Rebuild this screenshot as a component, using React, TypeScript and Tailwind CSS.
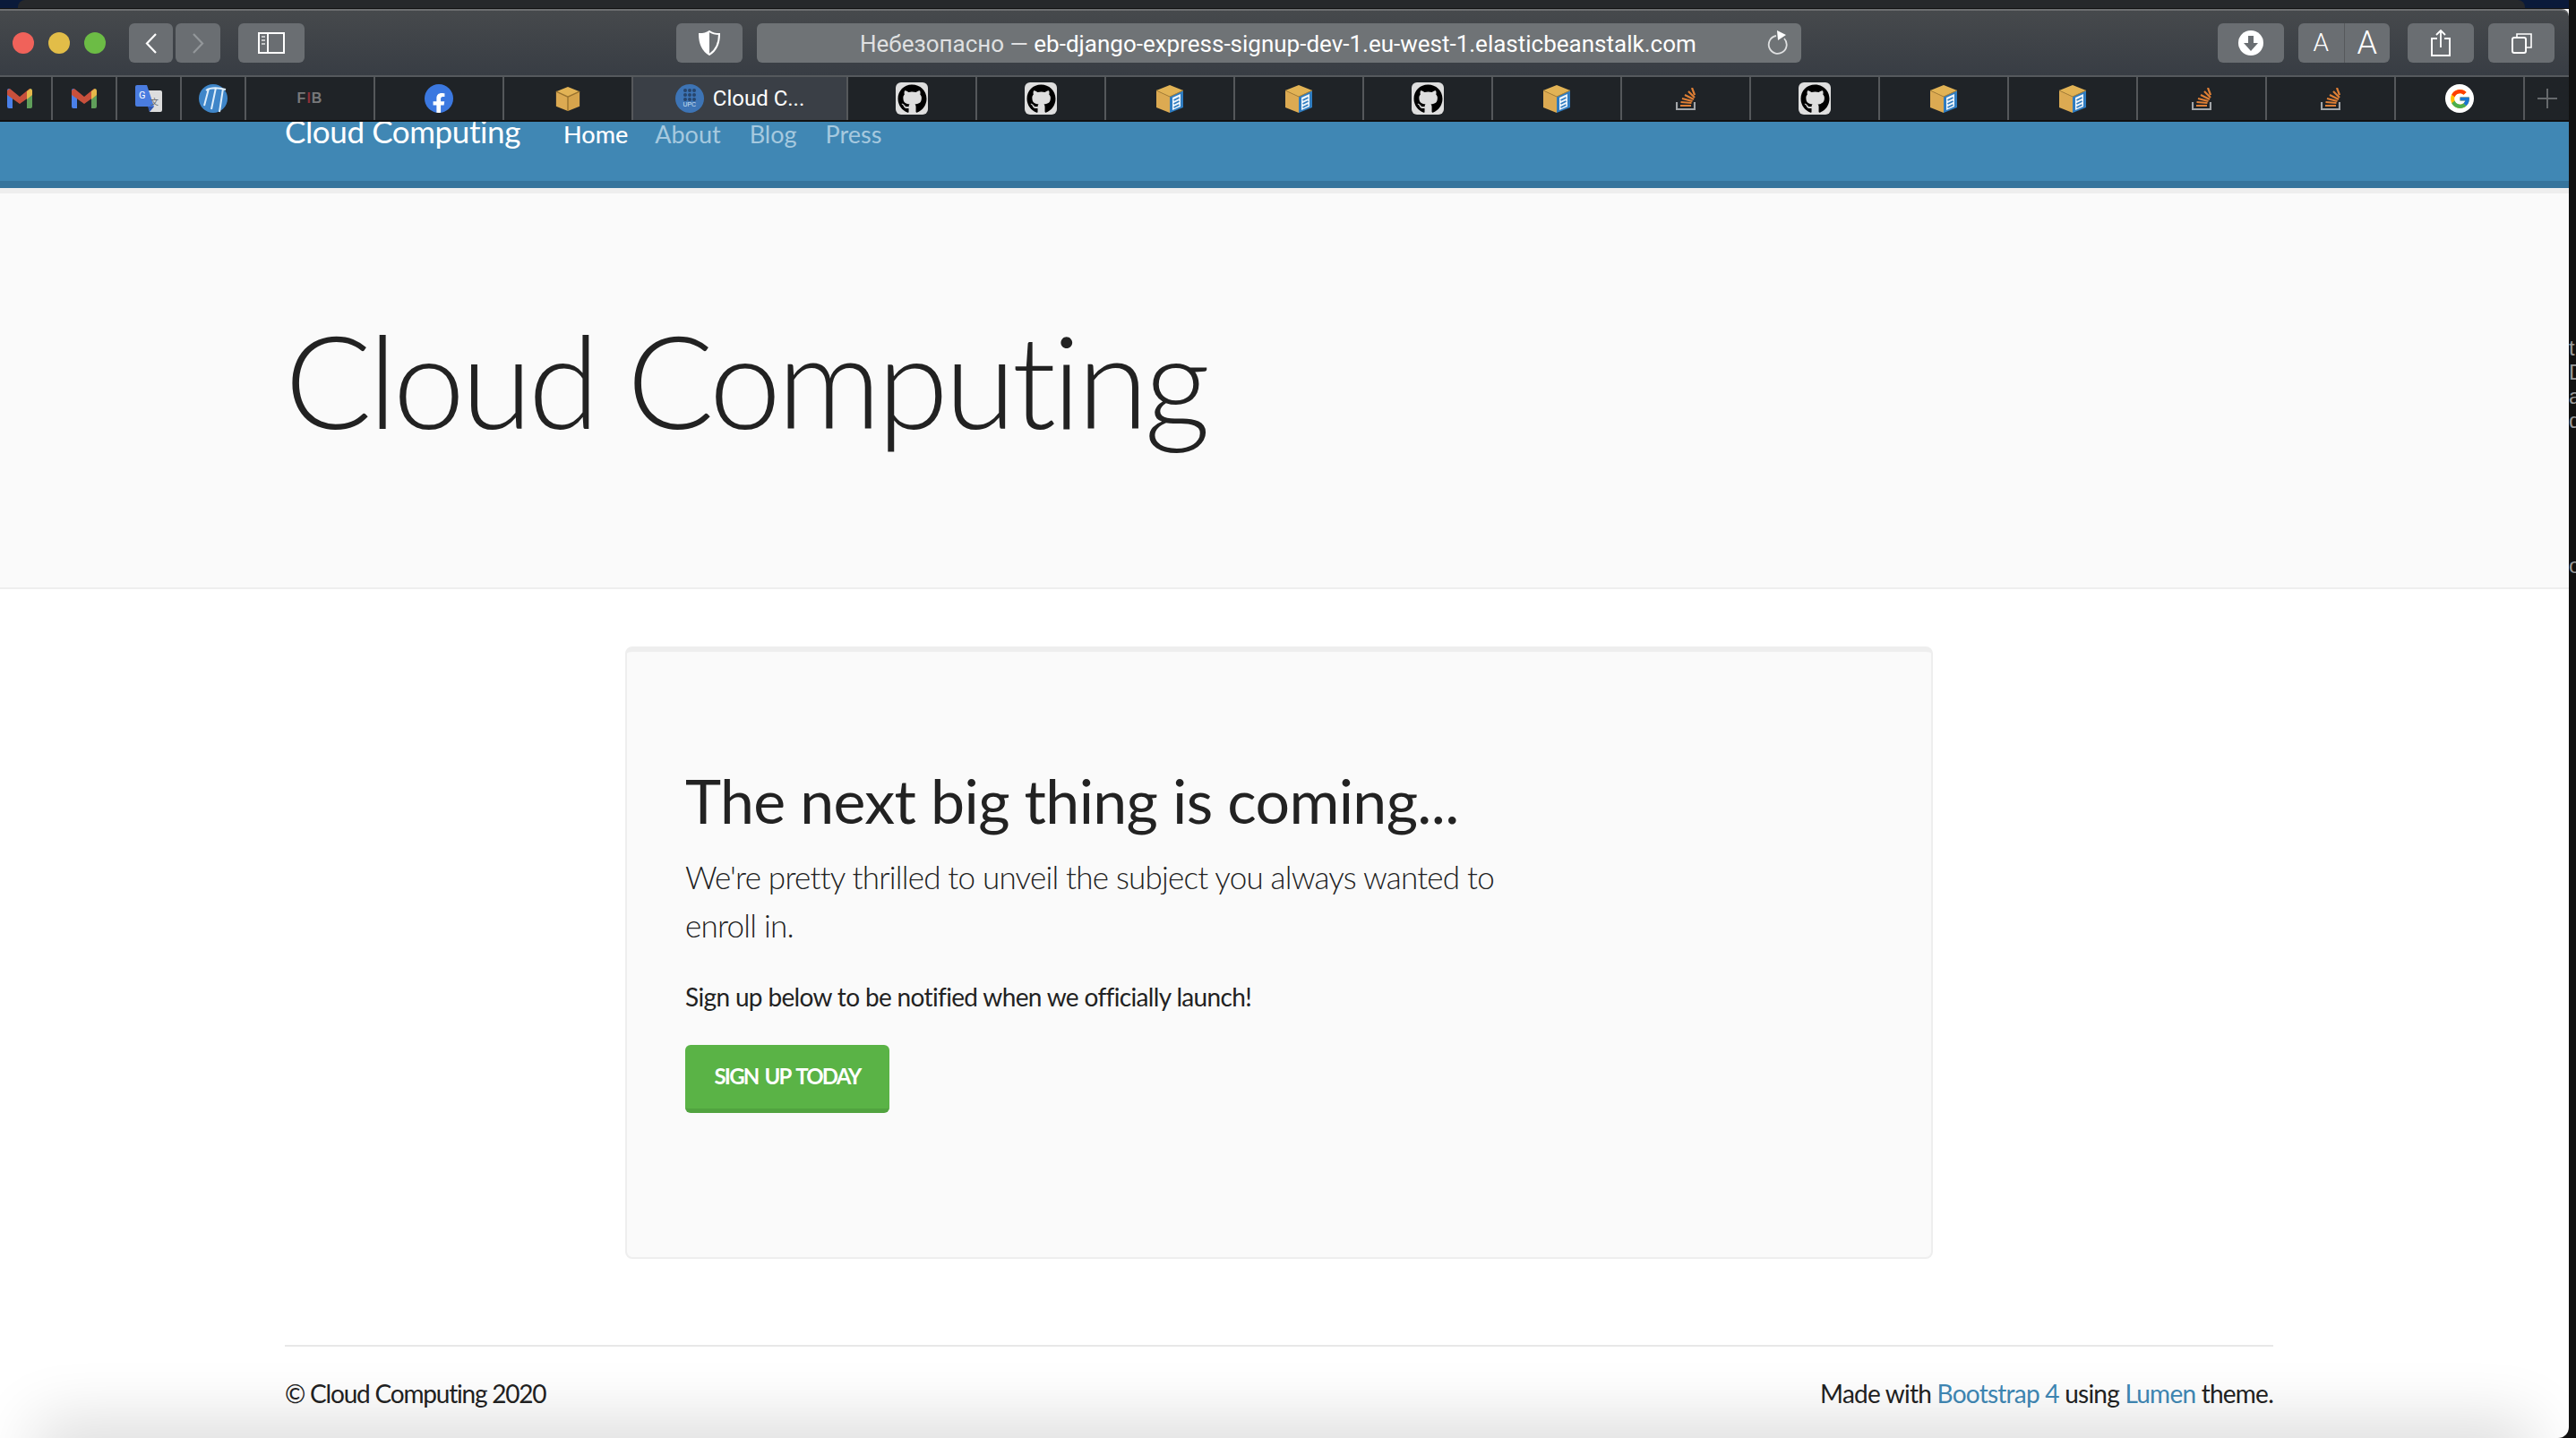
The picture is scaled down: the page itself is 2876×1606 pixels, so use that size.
import { FaFacebookF, FaGithub } from "react-icons/fa";
import { FcGoogle } from "react-icons/fc";

const GmailIcon = () => (
  <svg width="28" height="22" viewBox="0 0 28 22">
    <path d="M0 2a2 2 0 0 1 2-2l4 3v19H2a2 2 0 0 1-2-2z" fill="#4a80e8" />
    <path d="M22 3l4-3a2 2 0 0 1 2 2v18a2 2 0 0 1-2 2h-4z" fill="#5f9e5a" />
    <path d="M0 2l3-2 11 9L25 0l3 2v5L14 17 0 7z" fill="#c8503c" />
    <path d="M22 3l4-3 2 2v5l-6 5z" fill="#e6b84a" />
  </svg>
);

const TranslateIcon = () => (
  <svg width="30" height="30" viewBox="0 0 30 30">
    <path d="M12 6h16a2 2 0 0 1 2 2v20a2 2 0 0 1-2 2H16z" fill="#dddddd" />
    <path d="M2 0h11l8 24H2a2 2 0 0 1-2-2V2a2 2 0 0 1 2-2z" fill="#4a7ce0" />
    <path d="M14 24h7l-5 6z" fill="#2f56b0" />
    <text x="4" y="15" fontSize="11" fontFamily="Roboto, sans-serif" fill="#fff">G</text>
    <text x="17" y="22" fontSize="9" fontFamily="'Noto Sans CJK SC', sans-serif" fill="#666">文</text>
  </svg>
);

const MoodleIcon = () => (
  <svg width="32" height="32" viewBox="0 0 32 32">
    <circle cx="16" cy="16" r="16" fill="#3f86c9" />
    <path d="M6 24L11 5M14 28L19 4M23 31L27 5M8 7C14 3 22 4 30 6" stroke="#dfeefa" strokeWidth="2" fill="none" />
  </svg>
);

const FibIcon = () => (
  <div className="flex h-[12px] items-center font-['Liberation_Sans',sans-serif] text-[16px] leading-none font-bold tracking-[1px] text-[#77787a]">
    F<span className="text-[#8b3038]">I</span>B
  </div>
);

const FacebookIcon = () => (
  <div className="flex h-[32px] w-[32px] items-end justify-center overflow-hidden rounded-full bg-[#3b78e0]">
    <FaFacebookF size={24} color="#ffffff" className="translate-y-[2px]" />
  </div>
);

const BoxIcon = ({ doc }: { doc?: boolean }) => (
  <svg width={doc ? 32 : 28} height={doc ? 32 : 28} viewBox="0 0 32 32">
    <path d="M1 7l15-6 15 6-15 7z" fill="#e2b355" />
    <path d="M1 7l15 7v18L1 26z" fill="#dcaa52" />
    <path d="M16 14l15-7v19l-15 6z" fill={doc ? "#2f7cc0" : "#d6a44c"} />
    {doc ? (
      <path d="M19 15l9-4v14l-9 4z" fill="#eef5fb" />
    ) : (
      <path d="M16 14v18M1 7l15 7 15-7" stroke="#9a7430" strokeWidth="1.6" fill="none" />
    )}
    {doc && <path d="M20.5 18l6-3M20.5 22l6-3M20.5 26l6-3" stroke="#2f7cc0" strokeWidth="1.8" />}
    {doc && <path d="M1 7l15 7 15-7" stroke="#a9823a" strokeWidth="1" fill="none" />}
  </svg>
);

const GithubIcon = () => (
  <div className="flex h-[36px] w-[36px] items-center justify-center rounded-[6px] bg-[#dedede]">
    <FaGithub size={33} color="#000000" />
  </div>
);

const StackIcon = () => (
  <svg width="22" height="25" viewBox="0 0 22 25">
    <path d="M1 16v8h20v-8" stroke="#a3a6a9" strokeWidth="2.2" fill="none" />
    <path d="M5 20h12M5.5 16l12 1M7 12l11.5 3M10 8l10 5M14 4l7 7M18 0l3 8" stroke="#df7f35" strokeWidth="2.2" fill="none" />
  </svg>
);

const GoogleIcon = () => (
  <div className="flex h-[32px] w-[32px] items-center justify-center rounded-full bg-white">
    <FcGoogle size={25} />
  </div>
);

const ToolButton = ({ className, children }: { className: string; children?: React.ReactNode }) => (
  <div className={`flex h-[44px] items-center justify-center rounded-[6px] bg-[#6a6e72] ${className}`}>
    {children}
  </div>
);

const Tab = ({ children, small }: { children: React.ReactNode; small?: boolean }) => (
  <div
    className={`flex h-full shrink-0 items-center justify-center border-r-2 border-[#55585b] ${
      small ? "w-[72px]" : "w-[144px]"
    }`}
  >
    {children}
  </div>
);

const TabBar = () => (
  <div className="flex h-[50px] shrink-0 -ml-[13px] border-t-2 border-[#55595d] bg-[#1f2327]">
    <Tab small>
      <GmailIcon />
    </Tab>
    <Tab small>
      <GmailIcon />
    </Tab>
    <Tab small>
      <TranslateIcon />
    </Tab>
    <Tab small>
      <MoodleIcon />
    </Tab>
    <Tab>
      <FibIcon />
    </Tab>
    <Tab>
      <FacebookIcon />
    </Tab>
    <Tab>
      <BoxIcon />
    </Tab>
    <div className="flex h-full w-[240px] shrink-0 items-center justify-center gap-[10px] border-r-2 border-[#55585b] bg-[#3a3f46]">
      <div className="flex h-[32px] w-[32px] flex-col items-center justify-center rounded-full bg-[#3d74b5]">
        <div className="grid grid-cols-3 gap-[1px]">
          {Array.from({ length: 9 }).map((_, i) => (
            <div key={i} className="h-[4px] w-[4px] rounded-full bg-[#27456c]" />
          ))}
        </div>
        <span className="font-['Liberation_Sans',sans-serif] text-[7px] leading-[8px] text-[#cfe0f2]">UPC</span>
      </div>
      <span className="font-['Roboto',sans-serif] text-[24px] text-white">Cloud C...</span>
    </div>
    <Tab>
      <GithubIcon />
    </Tab>
    <Tab>
      <GithubIcon />
    </Tab>
    <Tab>
      <BoxIcon doc />
    </Tab>
    <Tab>
      <BoxIcon doc />
    </Tab>
    <Tab>
      <GithubIcon />
    </Tab>
    <Tab>
      <BoxIcon doc />
    </Tab>
    <Tab>
      <StackIcon />
    </Tab>
    <Tab>
      <GithubIcon />
    </Tab>
    <Tab>
      <BoxIcon doc />
    </Tab>
    <Tab>
      <BoxIcon doc />
    </Tab>
    <Tab>
      <StackIcon />
    </Tab>
    <Tab>
      <StackIcon />
    </Tab>
    <Tab>
      <GoogleIcon />
    </Tab>
    <div className="flex h-full flex-1 items-center justify-center">
      <svg width="22" height="22" viewBox="0 0 22 22">
        <path d="M11 0v22M0 11h22" stroke="#66696c" strokeWidth="2" />
      </svg>
    </div>
  </div>
);

const Toolbar = () => (
  <div className="flex h-[74px] shrink-0 items-center rounded-tr-[8px] border-t-2 border-[#6c6e70] bg-gradient-to-b from-[#46494c] to-[#383d44] pl-[14px] pr-[16px]">
    <div className="h-[24px] w-[24px] rounded-full bg-[#f0625a]" />
    <div className="ml-[16px] h-[24px] w-[24px] rounded-full bg-[#e2bd48]" />
    <div className="ml-[16px] h-[24px] w-[24px] rounded-full bg-[#6cbc45]" />
    <ToolButton className="ml-[26px] w-[49px]">
      <svg width="13" height="23" viewBox="0 0 13 23">
        <path d="M12 1L2 11.5 12 22" stroke="#ffffff" strokeWidth="2.2" fill="none" />
      </svg>
    </ToolButton>
    <ToolButton className="ml-[3px] w-[50px]">
      <svg width="13" height="23" viewBox="0 0 13 23">
        <path d="M1 1l10 10.5L1 22" stroke="#93979a" strokeWidth="2.2" fill="none" />
      </svg>
    </ToolButton>
    <ToolButton className="ml-[20px] w-[74px]">
      <svg width="30" height="24" viewBox="0 0 30 24">
        <rect x="1" y="1" width="28" height="22" fill="none" stroke="#ffffff" strokeWidth="2" />
        <path d="M11 1v22" stroke="#ffffff" strokeWidth="2" />
        <path d="M4 5h4M4 9h4M4 13h4" stroke="#c4c6c8" strokeWidth="2" />
      </svg>
    </ToolButton>
    <ToolButton className="ml-[415px] w-[74px]">
      <svg width="24" height="28" viewBox="0 0 24 28">
        <path d="M12 1c3 2 7 3 11 3 0 11-3 18-11 23C4 22 1 15 1 4c4 0 8-1 11-3z" fill="none" stroke="#ffffff" strokeWidth="2" />
        <path d="M12 1C9 3 5 4 1 4c0 11 3 18 11 23z" fill="#ffffff" />
      </svg>
    </ToolButton>
    <div className="ml-[16px] flex h-[44px] w-[1166px] items-center rounded-[6px] bg-[#6f7376] pl-[115px] pr-[14px]">
      <span className="flex-1 pt-[2px] font-['Roboto',sans-serif] text-[26px] whitespace-nowrap text-white">
        <span className="text-[#dfe0e1]">Небезопасно — </span>eb-django-express-signup-dev-1.eu-west-1.elasticbeanstalk.com
      </span>
      <svg width="24" height="28" viewBox="0 0 24 28">
        <path d="M19 9a10 10 0 1 1-9-3" stroke="#dfe0e1" strokeWidth="1.8" fill="none" />
        <path d="M11 0l10 5-9 6z" fill="#ffffff" />
      </svg>
    </div>
    <div className="flex-1" />
    <ToolButton className="w-[74px]">
      <svg width="28" height="28" viewBox="0 0 28 28">
        <circle cx="14" cy="14" r="14" fill="#ffffff" />
        <path d="M11 6h6v8h5l-8 9-8-9h5z" fill="#6a6e72" />
      </svg>
    </ToolButton>
    <div className="ml-[16px] flex h-[44px] w-[102px] overflow-hidden rounded-[6px] bg-[#6a6e72] font-['Roboto',sans-serif] font-light text-white">
      <div className="flex flex-1 items-center justify-center border-r border-[#56595c] text-[28px]">A</div>
      <div className="flex flex-1 items-center justify-center text-[36px]">A</div>
    </div>
    <ToolButton className="ml-[20px] w-[74px]">
      <svg width="22" height="30" viewBox="0 0 22 30">
        <path d="M7 10H1v19h20V10h-6" stroke="#ffffff" strokeWidth="2" fill="none" />
        <path d="M11 20V1M6 6l5-5 5 5" stroke="#ffffff" strokeWidth="1.8" fill="none" />
      </svg>
    </ToolButton>
    <ToolButton className="ml-[16px] w-[74px]">
      <svg width="23" height="23" viewBox="0 0 23 23">
        <rect x="1" y="5" width="15" height="17" rx="2" fill="none" stroke="#ffffff" strokeWidth="2" />
        <path d="M6 5V1h16v15h-6" stroke="#ffffff" strokeWidth="1.6" fill="none" />
      </svg>
    </ToolButton>
  </div>
);

const Navbar = () => (
  <div className="h-[74px] shrink-0 overflow-hidden border-b-[8px] border-[#36749c] bg-[#4087b4] pl-[318px] font-['Lato',sans-serif]">
    <div className="-mt-[12px] flex items-baseline">
      <span className="text-[35px] leading-[44px] tracking-[-0.4px] text-white">Cloud Computing</span>
      <span className="ml-[48px] text-[27px] font-medium text-white">Home</span>
      <span className="ml-[30px] text-[27px] text-[#a6c9df]">About</span>
      <span className="ml-[32px] text-[27px] text-[#a6c9df]">Blog</span>
      <span className="ml-[32px] text-[27px] text-[#a6c9df]">Press</span>
    </div>
  </div>
);

const Hero = () => (
  <div className="h-[448px] shrink-0 border-t-[6px] border-b-2 border-t-[#eeeeee] border-b-[#eeeeee] bg-[#fafafa] pl-[318px] pt-[122px]">
    <h1 className="font-['Lato',sans-serif] text-[144px] leading-[172px] font-light tracking-[-4.2px] text-[#222222] [font-variant-ligatures:none]">
      Cloud Computing
    </h1>
  </div>
);

const Card = () => (
  <div className="mt-[64px] ml-[698px] h-[684px] w-[1460px] rounded-[8px] border-2 border-t-[6px] border-[#eeeeee] bg-[#fafafa] pl-[65px] pt-[126px] text-[#222222]">
    <h2 className="text-[68px] leading-[80px] font-normal tracking-[-0.65px]">The next big thing is coming...</h2>
    <p className="mt-[18px] w-[920px] text-[35px] leading-[54px] font-light tracking-[-0.78px]">
      We're pretty thrilled to unveil the subject you always wanted to enroll in.
    </p>
    <p className="mt-[31px] text-[28px] leading-[44px] tracking-[-0.65px]">
      Sign up below to be notified when we officially launch!
    </p>
    <button className="mt-[32px] h-[76px] w-[228px] rounded-[6px] border-b-[5px] border-[#51a33f] bg-[#5ab346] pb-[2px] text-[24px] font-bold tracking-[-1.8px] text-white [word-spacing:3px]">
      SIGN UP TODAY
    </button>
  </div>
);

const Footer = () => (
  <div className="mt-[96px] mr-[330px] ml-[318px] flex justify-between border-t-2 border-[#e8e8e8] pt-[30px] text-[28px] leading-[44px] text-[#222222]">
    <span className="tracking-[-1.2px]">© Cloud Computing 2020</span>
    <span className="tracking-[-0.76px]">
      Made with <span className="text-[#4088b5]">Bootstrap 4</span> using <span className="text-[#4088b5]">Lumen</span>{" "}
      theme.
    </span>
  </div>
);

export default function App() {
  return (
    <div className="flex h-[1606px] w-[2876px] overflow-hidden bg-[#111111]">
      <div className="relative flex w-[2868px] shrink-0 flex-col overflow-hidden rounded-br-[12px] bg-white">
        <div className="flex h-[10px] shrink-0 border-b border-[#111111] bg-[#0a1a3a]">
          <div className="ml-[20px] w-[2799px] rounded-t-[8px] bg-[#26282b]" />
        </div>
        <Toolbar />
        <TabBar />
        <div className="h-[2px] shrink-0 bg-[#111111]" />
        <Navbar />
        <Hero />
        <div className="font-['Lato',sans-serif]">
          <Card />
          <Footer />
        </div>
        <div className="absolute right-[60px] bottom-[-40px] left-[60px] h-[40px] shadow-[0_0_70px_20px_rgba(0,0,0,0.14)]" />
      </div>
      <div className="mt-[375px] flex flex-col font-['Liberation_Sans',sans-serif] text-[24px] leading-[27px] text-[#9a9a9a]">
        <span>t</span>
        <span>D</span>
        <span>a</span>
        <span>d</span>
        <span className="mt-[135px]">o</span>
      </div>
    </div>
  );
}
